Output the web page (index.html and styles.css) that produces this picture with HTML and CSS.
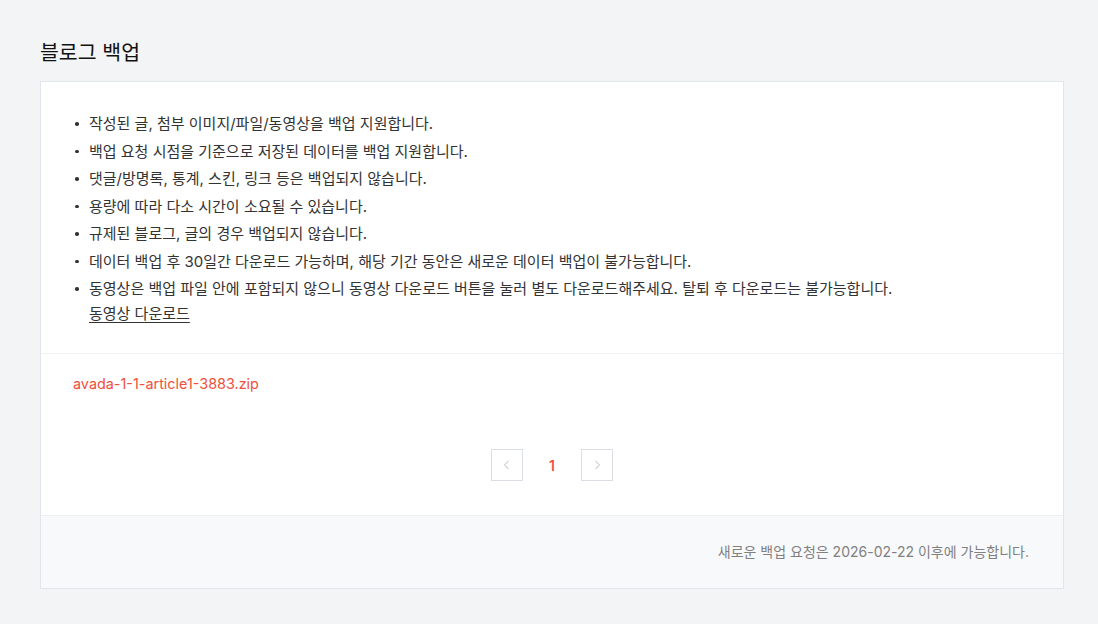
FILE: index.html
```html
<!DOCTYPE html>
<html lang="ko">
<head>
	<meta charset="UTF-8">
	<title>블로그 백업</title>
	<link rel="stylesheet" href="styles.css">
</head>
<body>
	<div class="page">
		<h2 class="title">블로그 백업</h2>
		<div class="card">
			<div class="guide">
				<ul class="guide-list">
					<li>작성된 글, 첨부 이미지/파일/동영상을 백업 지원합니다.</li>
					<li>백업 요청 시점을 기준으로 저장된 데이터를 백업 지원합니다.</li>
					<li>댓글/방명록, 통계, 스킨, 링크 등은 백업되지 않습니다.</li>
					<li>용량에 따라 다소 시간이 소요될 수 있습니다.</li>
					<li>규제된 블로그, 글의 경우 백업되지 않습니다.</li>
					<li>데이터 백업 후 30일간 다운로드 가능하며, 해당 기간 동안은 새로운 데이터 백업이 불가능합니다.</li>
					<li>동영상은 백업 파일 안에 포함되지 않으니 동영상 다운로드 버튼을 눌러 별도 다운로드해주세요. 탈퇴 후 다운로드는 불가능합니다.<br>
						<a href="#" class="video-link">동영상 다운로드</a></li>
				</ul>
			</div>
			<div class="files">
				<a href="#" class="file-link">avada-1-1-article1-3883.zip</a>
				<div class="paging">
					<a href="#" class="page-btn"><svg width="12" height="12" viewBox="0 0 12 12"><path d="M7.5 2 3.5 6 7.5 10" fill="none" stroke="#d3d5dc" stroke-width="1.2"/></svg></a>
					<span class="page-num">1</span>
					<a href="#" class="page-btn"><svg width="12" height="12" viewBox="0 0 12 12"><path d="M4.5 2 8.5 6 4.5 10" fill="none" stroke="#d3d5dc" stroke-width="1.2"/></svg></a>
				</div>
			</div>
			<div class="card-foot">새로운 백업 요청은 2026-02-22 이후에 가능합니다.</div>
		</div>
	</div>
</body>
</html>
```

FILE: styles.css
```css
body{margin: 0; background: #f3f4f6; font-family: Inter, "Noto Sans CJK KR", sans-serif; color: #333;}
ul{margin: 0; padding: 0; list-style: none;}
a{text-decoration: none;}
.page{padding: 39px 34px 30px 40px;}
.title{margin: 0 0 14px; font-size: 20.5px; line-height: 28px; font-weight: 400; color: #111;}
.card{width: 1022px; background: #fff; border: 1px solid #e3e5ec;}
.guide{padding: 29px 32px 27px; border-bottom: 1px solid #f0f1f4;}
.guide-list{font-size: 15px; line-height: 25px; color: #333;}
.guide-list li{position: relative; padding-left: 16px;}
.guide-list li::before{content: ""; position: absolute; left: 2px; top: 11px; width: 3.5px; height: 3.5px; border-radius: 50%; background: #333;}
.guide-list li + li{margin-top: 2.5px;}
.video-link{color: #333; text-decoration: underline; text-underline-offset: 3px;}
.files{padding: 20px 32px 34px;}
.file-link{display: block; font-size: 14.4px; line-height: 20px; color: #f0503c;}
.paging{display: flex; justify-content: center; align-items: center; gap: 13px; margin-top: 55px;}
.page-btn{width: 30px; height: 30px; border: 1px solid #dcdee6; display: flex; align-items: center; justify-content: center;}
.page-num{width: 32px; text-align: center; font-size: 14px; font-weight: 600; color: #f0503c;}
.card-foot{padding: 26px 34px 26px; background: #f8f9fb; border-top: 1px solid #eef0f3; text-align: right; font-size: 14px; line-height: 20px; color: #808080;}
```
